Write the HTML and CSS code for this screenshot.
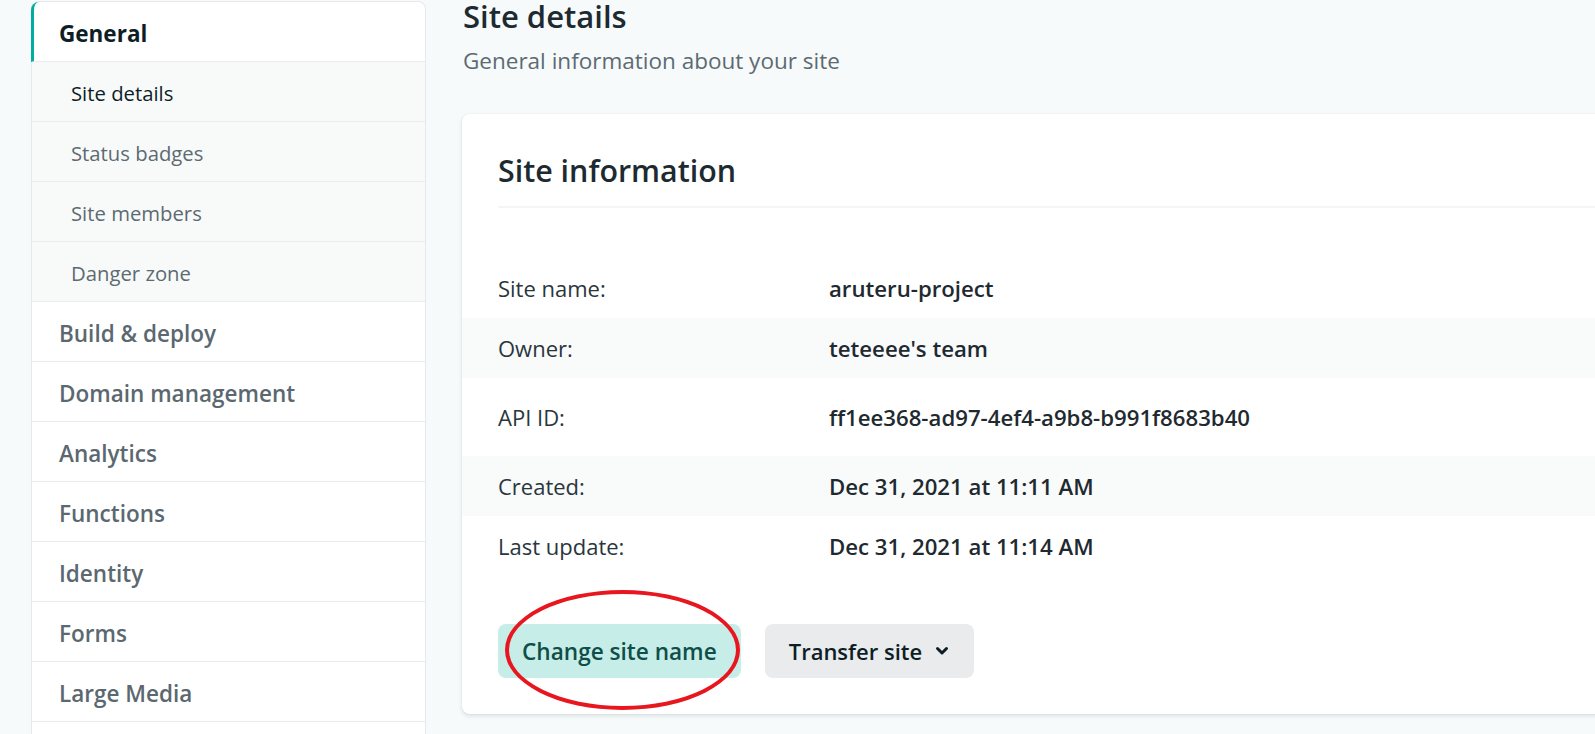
FILE: index.html
```html
<!DOCTYPE html>
<html lang="en">
<head>
<meta charset="utf-8">
<title>Site details</title>
<link rel="stylesheet" href="styles.css">
</head>
<body>
<div class="layout">
  <nav class="sidebar">
    <a class="nav-item main active">General</a>
    <a class="nav-item sub current">Site details</a>
    <a class="nav-item sub">Status badges</a>
    <a class="nav-item sub">Site members</a>
    <a class="nav-item sub">Danger zone</a>
    <a class="nav-item main">Build &amp; deploy</a>
    <a class="nav-item main">Domain management</a>
    <a class="nav-item main">Analytics</a>
    <a class="nav-item main">Functions</a>
    <a class="nav-item main">Identity</a>
    <a class="nav-item main">Forms</a>
    <a class="nav-item main">Large Media</a>
  </nav>
  <main class="content">
    <h1 class="page-title">Site details</h1>
    <p class="page-subtitle">General information about your site</p>
    <section class="card">
      <header class="card-header">
        <h2 class="card-title">Site information</h2>
      </header>
      <dl class="info-list">
        <div class="info-row">
          <dt class="info-label">Site name:</dt>
          <dd class="info-value">aruteru-project</dd>
        </div>
        <div class="info-row striped">
          <dt class="info-label">Owner:</dt>
          <dd class="info-value">teteeee's team</dd>
        </div>
        <div class="info-row tall">
          <dt class="info-label">API ID:</dt>
          <dd class="info-value">ff1ee368-ad97-4ef4-a9b8-b991f8683b40</dd>
        </div>
        <div class="info-row striped">
          <dt class="info-label">Created:</dt>
          <dd class="info-value">Dec 31, 2021 at 11:11 AM</dd>
        </div>
        <div class="info-row">
          <dt class="info-label">Last update:</dt>
          <dd class="info-value">Dec 31, 2021 at 11:14 AM</dd>
        </div>
      </dl>
      <div class="actions">
        <button class="btn btn-teal">Change site name</button>
        <button class="btn btn-gray">Transfer site
          <svg class="chevron" width="14" height="10" viewBox="0 0 14 10"><path d="M2.5 2.5 L7 7 L11.5 2.5" fill="none" stroke="#0e1e25" stroke-width="3" stroke-linecap="round" stroke-linejoin="round"/></svg>
        </button>
      </div>
    </section>
  </main>
</div>
<div class="annotation"></div>
</body>
</html>
```

FILE: styles.css
```css
* { box-sizing: border-box; }

html, body {
  margin: 0;
  height: 100%;
}

body {
  background: #f6fafa;
  font-family: "Open Sans", "Noto Sans", sans-serif;
  color: #0e1e25;
  overflow: hidden;
  position: relative;
}

.layout {
  display: flex;
  gap: 36px;
  padding-left: 31px;
  align-items: flex-start;
}

/* Sidebar */
.sidebar {
  width: 395px;
  flex: none;
  margin-top: 1px;
  padding-bottom: 60px;
  background: #fff;
  border: 1px solid #e6eaea;
  border-bottom: none;
  border-radius: 8px 8px 0 0;
  display: flex;
  flex-direction: column;
}

.nav-item {
  display: flex;
  align-items: center;
  height: 60px;
  padding-top: 4px;
  border-bottom: 1px solid #e9ecec;
  text-decoration: none;
  white-space: nowrap;
}

.nav-item.main {
  font-size: 22.5px;
  font-weight: 600;
  color: #5b6870;
  padding-left: 27px;
}

.nav-item.main.active {
  color: #0e1e25;
  font-weight: 700;
  margin-left: -1px;
  border-left: 3px solid #00ad9f;
  padding-left: 25px;
  border-top-left-radius: 8px;
}

.nav-item.sub {
  font-size: 20.3px;
  color: #5d6a72;
  background: #f8fafa;
  padding-left: 39px;
  padding-top: 2px;
}

.nav-item.sub.current {
  color: #0e1e25;
}

/* Content */
.content {
  flex: none;
  width: 1300px;
}

.page-title {
  margin: -4px 0 0 1px;
  font-size: 31px;
  line-height: 40px;
  font-weight: 600;
  color: #1d2a31;
}

.page-subtitle {
  margin: 10px 0 0 1px;
  font-size: 22.5px;
  line-height: 30px;
  color: #5d6a72;
}

.card {
  margin-top: 38px;
  background: #fff;
  border-radius: 8px;
  box-shadow: 0 2px 4px rgba(14, 30, 37, 0.12), 0 0 2px rgba(14, 30, 37, 0.06);
  padding-bottom: 36px;
}

.card-header {
  padding: 36px 36px 0;
}

.card-title {
  margin: 0;
  font-size: 30.4px;
  line-height: 42px;
  font-weight: 600;
  color: #1d2a31;
  padding-bottom: 14px;
  border-bottom: 2px solid #f4f6f6;
}

.info-list {
  margin: 50px 0 0;
}

.info-row {
  display: flex;
  align-items: center;
  height: 60px;
  padding: 0 36px;
}

.info-row.tall {
  height: 78px;
}

.info-row.striped {
  background: #f9fafa;
}

.info-label {
  width: 331px;
  flex: none;
  font-size: 22px;
  color: #2a363c;
}

.info-value {
  margin: 0;
  font-size: 22.2px;
  font-weight: 600;
  color: #1f2a30;
}

.actions {
  display: flex;
  gap: 24px;
  padding: 48px 36px 0;
}

.btn {
  height: 54px;
  border: none;
  border-radius: 8px;
  padding: 0 24px;
  font-family: inherit;
  font-size: 22.6px;
  font-weight: 600;
  display: flex;
  align-items: center;
}

.btn-teal {
  background: #c7ede8;
  color: #0f4f4a;
}

.btn-gray {
  background: #e9ebed;
  color: #0e1e25;
  font-size: 22px;
  padding-right: 25px;
}

.chevron {
  margin-left: 13px;
}

/* Red hand-drawn annotation around the button */
.annotation {
  position: absolute;
  left: 505px;
  top: 590px;
  width: 235px;
  height: 120px;
  border: 4px solid #e8161e;
  border-radius: 50%;
  pointer-events: none;
}
```
